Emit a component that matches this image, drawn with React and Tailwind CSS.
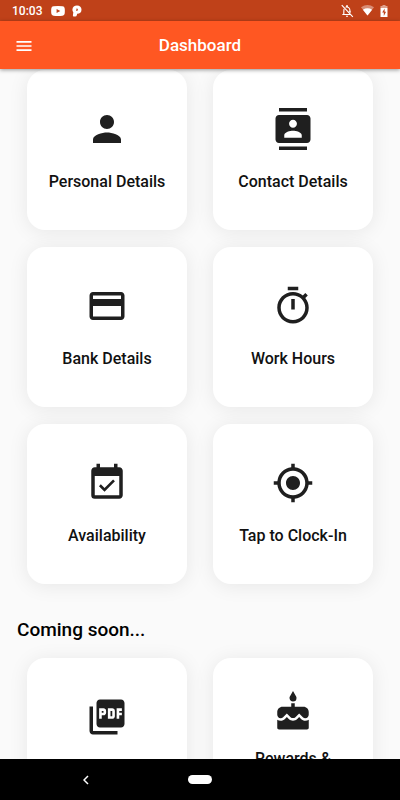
import {
  MdCake,
  MdContacts,
  MdCreditCard,
  MdEventAvailable,
  MdMenu,
  MdMyLocation,
  MdPerson,
  MdPictureAsPdf,
} from "react-icons/md";

const TimerIcon = ({ className }) => (
  <svg viewBox="0 0 24 24" fill="currentColor" className={className} aria-hidden="true">
    <path d="M15 1H9v2h6V1zm-4 13h2V8h-2v6zm8.03-6.61l1.42-1.42c-.43-.51-.9-.99-1.41-1.41l-1.42 1.42C16.07 4.74 14.12 4 12 4c-4.97 0-9 4.03-9 9s4.02 9 9 9 9-4.03 9-9c0-2.12-.74-4.07-1.97-5.61zM12 20c-3.87 0-7-3.13-7-7s3.13-7 7-7 7 3.13 7 7-3.13 7-7 7z" />
  </svg>
);

const menuItems = [
  { label: "Personal Details", Icon: MdPerson },
  { label: "Contact Details", Icon: MdContacts },
  { label: "Bank Details", Icon: MdCreditCard },
  { label: "Work Hours", Icon: TimerIcon },
  { label: "Availability", Icon: MdEventAvailable },
  { label: "Tap to Clock-In", Icon: MdMyLocation },
];

const comingSoon = [
  { label: "Documents", Icon: MdPictureAsPdf },
  { label: "Rewards & Benefits", Icon: MdCake, compact: true },
];

const StatusBar = () => (
  <div className="flex h-[21px] shrink-0 items-center bg-[#bf4119] px-3 text-white">
    <span className="text-xs font-medium">10:03</span>
    <svg viewBox="0 0 14 10" className="ml-[9px] h-[10px] w-[14px]" aria-hidden="true">
      <path
        fill="currentColor"
        fillRule="evenodd"
        d="M2.5.3Q7-.3 11.500.3 13.500.4 13.700 2.500 14 5 13.700 7.500 13.500 9.600 11.500 9.700 7 10.300 2.500 9.700.5 9.600.3 7.500 0 5 .3 2.500.5.4 2.500.3zM5.600 2.900v4.200L9.300 5z"
      />
    </svg>
    <svg viewBox="0 0 10 12" className="ml-[7px] h-3 w-[10px]" aria-hidden="true">
      <path
        fill="currentColor"
        fillRule="evenodd"
        d="M5 .5C7.900.5 9.500 2.300 9.500 4.700S7.800 8.800 5.200 8.800L4.800 10.300Q4.500 11.500 3.300 11.500H1.700Q.8 11.500.9 10.600L1.300 7.200Q.3 6 .4 4.500C.6 2 2.400.5 5 .5zM4.500 3.600L4.200 6Q5.800 6.100 5.900 4.700 5.900 3.500 4.500 3.600z"
      />
    </svg>
    <div className="ml-auto flex items-center">
      <svg viewBox="0 0 24 24" className="h-[14px] w-[14px]" aria-hidden="true">
        <g fill="none" stroke="currentColor" strokeWidth="2">
          <path d="M3 2l19 20M9.500 5.500C14 4 17 7 17 11v3M7 8.500C6.500 10 6.500 11 6.500 18M4 18h13" />
        </g>
        <path fill="currentColor" d="M10.500 2h3v3h-3zM10 20h4a2 2 0 01-4 0zM16 12h2v4l-2-2z" />
      </svg>
      <svg viewBox="0 0 24 20" className="ml-[7px] h-[11px] w-[13px]" aria-hidden="true">
        <path fill="currentColor" fillOpacity=".4" d="M0 4Q12-4 24 4L12 19z" />
        <path fill="currentColor" d="M3.500 8.500Q12 3 20.500 8.500L12 19z" />
      </svg>
      <svg viewBox="0 0 8 12" className="ml-[6px] h-3 w-2" aria-hidden="true">
        <path fill="currentColor" fillOpacity=".5" d="M2.500 0h3v1H7.500v2H.5V1h2z" />
        <path
          fill="currentColor"
          fillRule="evenodd"
          d="M.5 3h7v9H.5zM4.600 3.500L2.200 7.500h1.600V11l2.300-4.300H4.600z"
        />
      </svg>
    </div>
  </div>
);

const Card = ({ label, Icon, compact }) => (
  <button
    type="button"
    className={`flex aspect-square flex-col items-center justify-center rounded-[18px] bg-white px-5 shadow-[0_2px_20px_rgba(0,0,0,0.08)] ${
      compact ? "gap-4 pt-1" : "gap-[22px]"
    }`}
  >
    <Icon className="h-[42px] w-[42px] shrink-0 text-[#1f1f1f]" />
    <span className="text-base leading-5 font-medium text-[#111]">{label}</span>
  </button>
);

const CardGrid = ({ items }) => (
  <div className="grid grid-cols-2 gap-x-[26px] gap-y-[17px] px-[27px]">
    {items.map((item) => (
      <Card key={item.label} {...item} />
    ))}
  </div>
);

const App = () => {
  return (
    <div className="flex h-screen flex-col bg-[#fafafa] font-['Roboto',sans-serif]">
      <StatusBar />

      <header className="z-10 grid h-12 shrink-0 grid-cols-[1fr_auto_1fr] items-center bg-[#ff5722] px-[14px] pt-0.5 text-white shadow-[0_1px_4px_rgba(0,0,0,0.4)]">
        <button type="button" aria-label="Open menu" className="justify-self-start">
          <MdMenu className="h-5 w-5" />
        </button>
        <h1 className="text-[17px] font-medium">Dashboard</h1>
      </header>

      <main className="min-h-0 flex-1 overflow-y-auto pt-px pb-6 [scrollbar-width:none]">
        <CardGrid items={menuItems} />
        <h2 className="px-[17px] pt-[33px] pb-[15px] text-[19px] leading-[26px] font-medium text-black">
          Coming soon...
        </h2>
        <CardGrid items={comingSoon} />
      </main>

      <nav className="z-10 grid h-[41px] shrink-0 grid-cols-[1fr_auto_1fr] items-center bg-black text-white">
        <button type="button" aria-label="Back" className="justify-self-center pr-4">
          <svg viewBox="0 0 6 10" className="h-[10px] w-[6px]" aria-hidden="true">
            <path d="M5 1L1 5l4 4" fill="none" stroke="currentColor" strokeWidth="1.5" />
          </svg>
        </button>
        <button type="button" aria-label="Home" className="h-[9px] w-6 rounded-full bg-white" />
      </nav>
    </div>
  );
};

export default App;
